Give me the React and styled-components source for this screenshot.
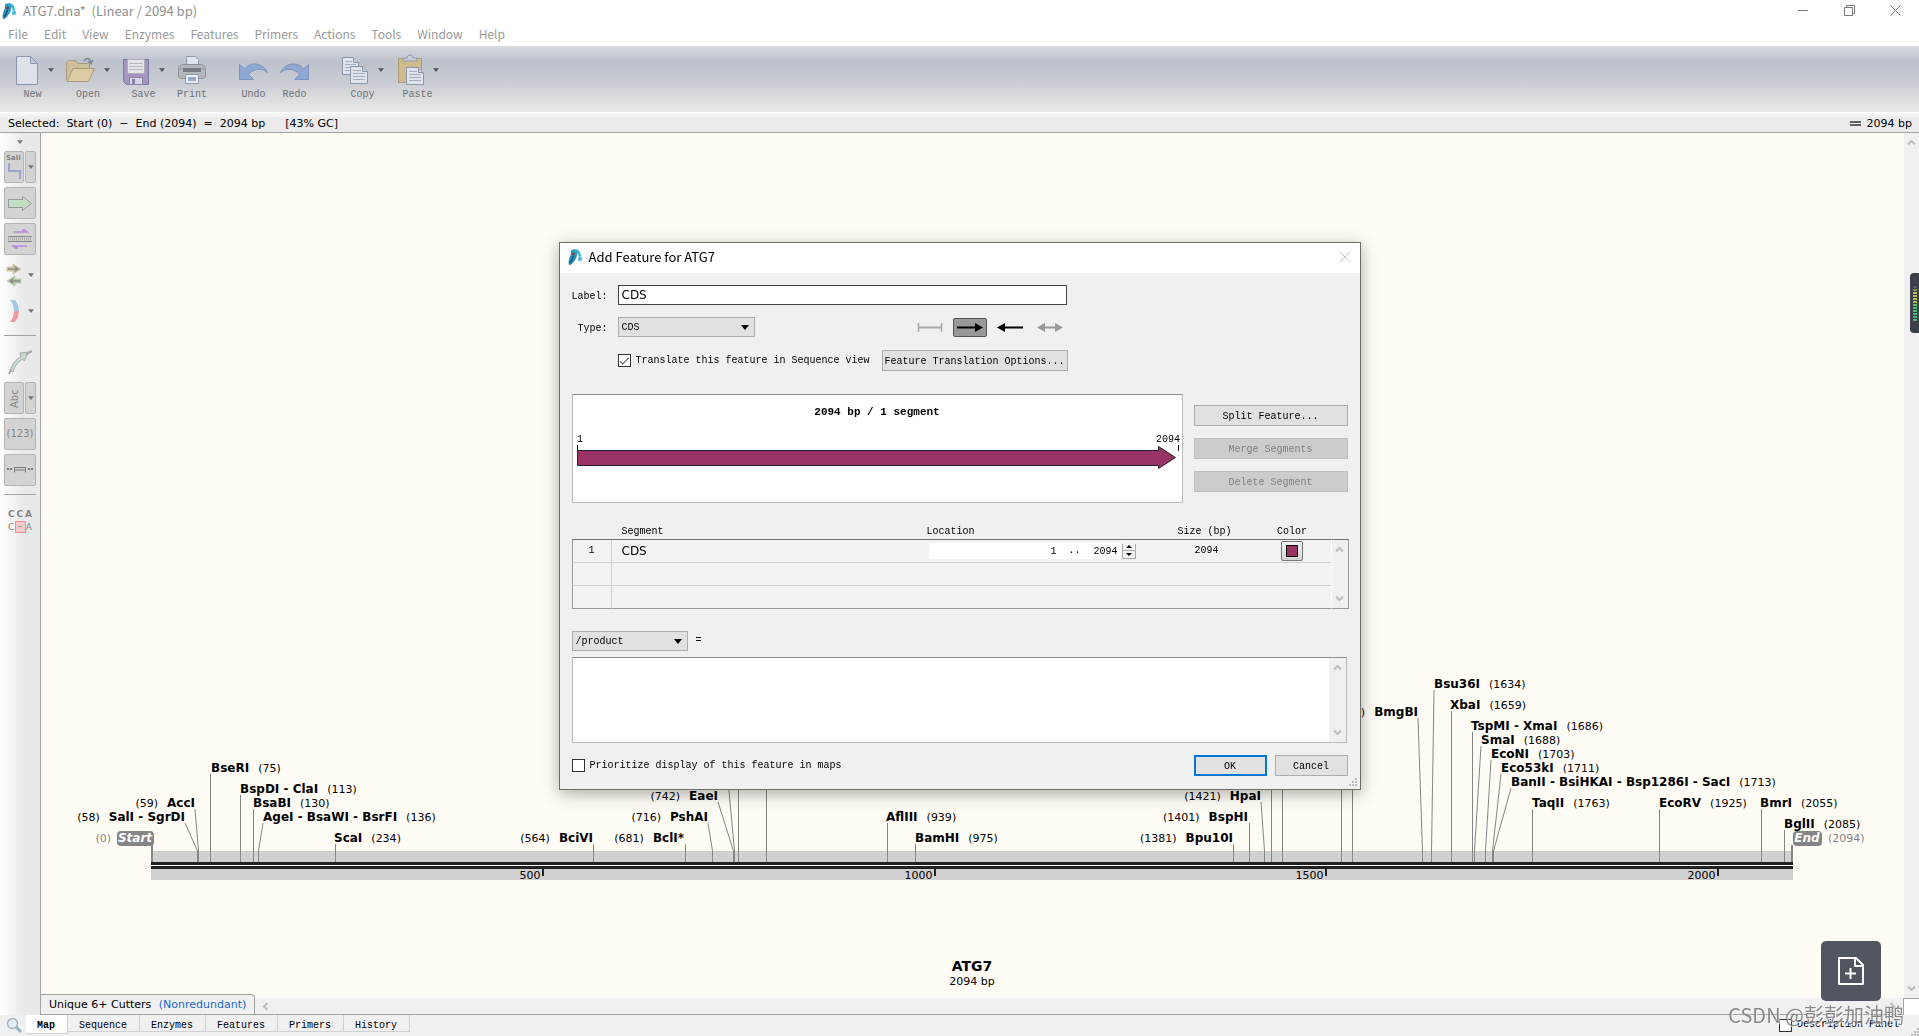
import React, { useState } from "react";
import styled, { createGlobalStyle, css } from "styled-components";

const ui = '"Noto Sans CJK SC", "Noto Sans", sans-serif';
const sans = '"DejaVu Sans", sans-serif';
const mono = '"Liberation Mono", monospace';

const GlobalStyle = createGlobalStyle`
  *, *::before, *::after { box-sizing: border-box; }
  body { margin: 0; background: #f0f0f0; color: #000; font: 11px ${sans}; overflow: hidden; }
  button, input, select, textarea { font: inherit; color: inherit; margin: 0; border-radius: 0; outline: none; }
  button { padding: 0; cursor: default; }
  svg { display: block; flex: none; }
`;

const Shell = styled.div`
  display: flex;
  flex-direction: column;
  height: 100vh;
  position: relative;
`;

/* ---------- title bar and menu ---------- */
const TitleBar = styled.header`
  display: flex;
  align-items: flex-start;
  gap: 6px;
  height: 24px;
  padding: 0 1px 0 2px;
  background: #fff;
  color: #8f8f8f;
  font: 13px/22px ${ui};
  & > svg { margin-top: 3px; }
`;
const TitleText = styled.h1`
  flex: 1;
  margin: 0;
  font: inherit;
  white-space: pre;
`;
const ControlSet = styled.div`
  display: flex;
`;
const WindowButton = styled.button`
  display: grid;
  place-items: center;
  width: 46px;
  height: 20px;
  border: 0;
  background: transparent;
  color: #777;
`;
const MenuBar = styled.nav`
  display: flex;
  gap: 16px;
  height: 22px;
  padding: 0 8px;
  background: #fff;
  font: 12px/20px ${ui};
`;
const MenuLink = styled.a`
  color: #999;
  text-decoration: none;
`;

/* ---------- toolbar ---------- */
const Toolbar = styled.div`
  display: flex;
  gap: 32px;
  height: 66px;
  padding: 8px 11px 0;
  background: linear-gradient(#d8dbe1 0, #bcc1cb 16px, #c9ccd3 36px, #e9e9e9 100%);
`;
const ToolGroup = styled.div`
  display: flex;
  gap: 12px;
`;
const ToolButton = styled.button`
  display: flex;
  flex-direction: column;
  align-items: center;
  gap: 3px;
  height: 50px;
  border: 0;
  background: transparent;
  color: #6f7278;
  font: 10px/12px ${mono};
`;
const ToolIcon = styled.span`
  display: flex;
  align-items: center;
  gap: 9px;
  height: 32px;
`;
const StatusBar = styled.div`
  display: flex;
  align-items: center;
  justify-content: space-between;
  height: 21px;
  padding: 2px 7px 0 8px;
  border-top: 1px solid #fff;
  border-bottom: 1px solid #a3a3a3;
  background: linear-gradient(#fafafa, #ebebeb 5px);
  font: 11px/18px ${sans};
  white-space: pre;
`;
const Selection = styled.div`
  display: flex;
  gap: 7px;
`;
const Gc = styled.span`
  padding-left: 13px;
`;
const Strands = styled.span`
  display: inline-flex;
  align-items: center;
  gap: 6px;
`;

/* ---------- workspace ---------- */
const Workspace = styled.div`
  display: flex;
  flex: 1;
  min-height: 0;
`;
const SideBar = styled.aside`
  display: flex;
  flex-direction: column;
  gap: 4px;
  width: 41px;
  padding: 4px 4px 0;
  border-right: 1px solid #a3a3a3;
  background: linear-gradient(90deg, #fff, #e9e9e9 60%);
  color: #999;
`;
const SideCaret = styled.button`
  display: grid;
  place-items: center;
  height: 10px;
  border: 0;
  background: transparent;
`;
const SideRow = styled.div`
  display: flex;
  gap: 1px;
  height: 32px;
`;
const SideButton = styled.button`
  display: grid;
  place-items: center;
  flex: ${(p) => (p.$narrow ? "0 0 11px" : "1")};
  border: 1px solid ${(p) => (p.$flat ? "transparent" : "#b4b4b4")};
  border-radius: 2px;
  background: ${(p) => (p.$flat ? "transparent" : "#d3d3d3")};
  color: #858585;
  font: 10px/12px ${sans};
`;
const SideRule = styled.hr`
  width: 100%;
  height: 11px;
  margin: 0;
  border: 0;
  background: linear-gradient(#a3a3a3, #a3a3a3) 0 4px / 100% 1px no-repeat;
`;
const Sequences = styled.div`
  padding: 3px 0 0 4px;
  color: #858585;
  font: 9px/12px ${sans};
`;
const Bases = styled.div`
  display: flex;
  justify-content: space-between;
  width: 24px;
  height: 13px;
  font-weight: ${(p) => (p.$bold ? "bold" : "normal")};
`;
const Gap = styled.span`
  width: 11px;
  height: 12px;
  border: 1px solid #ef8d8d;
  background: #f5cccc;
  line-height: 9px;
  text-align: center;
`;
const View = styled.main`
  display: flex;
  flex-direction: column;
  flex: 1;
  min-width: 0;
`;
const ViewBody = styled.div`
  display: flex;
  flex: 1;
  min-height: 0;
`;
const Canvas = styled.div`
  flex: 1;
  min-width: 0;
  background: #fffcf5;
`;
const MapSvg = styled.svg`
  width: 100%;
  height: 100%;
  font: 11px ${sans};
`;
const VScroll = styled.div`
  display: flex;
  flex-direction: column;
  justify-content: space-between;
  align-items: center;
  width: ${(p) => p.$w || 17}px;
  padding: 5px 0;
  background: #f0f0f0;
`;
const ViewFoot = styled.div`
  display: flex;
  align-items: center;
  justify-content: space-between;
  height: 17px;
  border-bottom: 1px solid #a3a3a3;
  background: #f0f0f0;
`;
const FootLeft = styled.div`
  display: flex;
  align-items: center;
  gap: 6px;
`;
const FootRight = styled(FootLeft)`
  height: 100%;
`;
const Corner = styled.span`
  width: 16px;
  height: 17px;
  border: 1px solid #a3a3a3;
  border-width: 1px 0 0 1px;
  background: #fff;
`;
const EnzymeTab = styled.button`
  height: 20px;
  margin-top: -4px;
  padding: 1px 8px 0;
  border: 1px solid #a3a3a3;
  border-width: 1px 1px 0 0;
  border-radius: 0 4px 0 0;
  background: #f0f0f0;
  color: #000;
  font: 11px/18px ${sans};
  white-space: pre;
`;
const Blue = styled.span`
  padding-left: 4px;
  color: #1668c8;
`;

/* ---------- bottom tabs ---------- */
const BottomBar = styled.footer`
  display: flex;
  align-items: flex-start;
  justify-content: space-between;
  height: 21px;
  background: #f0f0f0;
  font: 10px/12px ${mono};
`;
const Tabs = styled.div`
  display: flex;
  align-items: flex-start;
`;
const Magnifier = styled.button`
  width: 26px;
  padding: 2px 0 0 6px;
  border: 0;
  background: transparent;
`;
const Tab = styled.button`
  display: flex;
  height: ${(p) => (p.$on ? 19 : 17)}px;
  padding: 4px 12px 0 11px;
  border: 1px solid #d0d0d0;
  border-width: 0 1px 1px 0;
  background: ${(p) => (p.$on ? "#fff" : "#f0f0f0")};
  font-weight: ${(p) => (p.$on ? "bold" : "normal")};
  line-height: 13px;
`;
const CheckLabel = styled.label`
  display: inline-flex;
  align-items: center;
  gap: 5px;
  font: 10px/14px ${mono};
  white-space: pre;
`;
const Check = styled.input.attrs({ type: "checkbox" })`
  appearance: none;
  display: grid;
  place-items: center;
  width: 13px;
  height: 13px;
  border: 1px solid #333;
  background: #fff;
  &:checked::before {
    content: "";
    width: 9px;
    height: 4px;
    border: solid #444;
    border-width: 0 0 1px 1px;
    transform: translateY(-1px) rotate(-45deg);
  }
`;
const PanelToggle = styled.div`
  padding: 3px 20px 0 0;
`;

/* ---------- things floating over the window ---------- */
const NoteButton = styled.button`
  position: absolute;
  right: 38px;
  bottom: 35px;
  display: grid;
  place-items: center;
  width: 60px;
  height: 60px;
  border: 0;
  border-radius: 5px;
  background: #50555f;
`;
const EdgeMeter = styled.div`
  position: absolute;
  right: 0;
  top: 273px;
  display: flex;
  flex-direction: column;
  justify-content: center;
  align-items: center;
  gap: 1px;
  width: 9px;
  height: 60px;
  border-radius: 4px 0 0 4px;
  background: #3c404a;
`;
const MeterBar = styled.i`
  width: 4px;
  height: 2px;
  background: ${(p) => p.$c};
`;
const Watermark = styled.div`
  position: absolute;
  right: 15px;
  bottom: 7px;
  color: rgba(125, 125, 125, 0.9);
  font: 400 20px/28px "Noto Sans CJK SC", sans-serif;
  text-shadow: 1px 1px 0 rgba(255, 255, 255, 0.7);
  white-space: nowrap;
  pointer-events: none;
`;

/* ---------- dialog ---------- */
const Overlay = styled.div`
  position: fixed;
  inset: 0;
  display: flex;
  align-items: center;
  justify-content: center;
  padding-bottom: 4px;
`;
const Dialog = styled.section`
  width: 802px;
  border: 1px solid #6c6e6c;
  background: #f0f0f0;
  box-shadow: 0 4px 16px rgba(0, 0, 0, 0.32);
  font: 10px/12px ${mono};
`;
const DialogTitle = styled.div`
  display: flex;
  align-items: center;
  gap: 6px;
  height: 30px;
  padding: 0 9px 2px 8px;
  background: #fff;
`;
const DialogName = styled.h2`
  flex: 1;
  margin: 0;
  font: 13px/26px ${ui};
`;
const PlainButton = styled.button`
  border: 0;
  background: transparent;
`;
const DialogBody = styled.form`
  padding: 12px 11px 13px 12px;
`;
const FormGrid = styled.div`
  display: grid;
  grid-template-columns: 36px 450px;
  grid-template-rows: 20px 20px 23px;
  column-gap: 10px;
  row-gap: 12px;
  align-items: center;
`;
const FieldLabel = styled.label`
  padding-top: 3px;
  text-align: right;
`;
const TextField = styled.input`
  width: 449px;
  height: 20px;
  padding: 0 3px;
  border: 1px solid #444;
  background: #fff;
  font: 12px/18px ${sans};
`;
const Split = styled.div`
  display: flex;
  align-items: center;
  justify-content: space-between;
  grid-column: 2;
`;
const SelectBox = styled.span`
  position: relative;
  display: inline-block;
  width: ${(p) => p.$w}px;
  height: 20px;
  & > svg { position: absolute; right: 6px; top: 8px; pointer-events: none; }
`;
const Select = styled.select`
  appearance: none;
  width: 100%;
  height: 20px;
  padding: 2px 3px 0;
  border: 1px solid #adadad;
  background: #e1e1e1;
`;
const ArrowGroup = styled.div`
  display: flex;
  gap: 6px;
  padding-right: 1px;
`;
const ArrowButton = styled.button`
  display: grid;
  place-items: center;
  width: 34px;
  height: 19px;
  border: 1px solid ${(p) => (p.$on ? "#555" : "transparent")};
  border-radius: 2px;
  background: ${(p) => (p.$on ? "#999" : "transparent")};
`;
const PushButton = styled.button`
  width: ${(p) => p.$w}px;
  height: 21px;
  padding-top: 2px;
  border: 1px solid #adadad;
  background: #e1e1e1;
  white-space: pre;
  &:disabled { border-color: #bfbfbf; background: #ccc; color: #808080; }
  ${(p) => p.$primary && css`border: 2px solid #0078d7;`}
`;
const PreviewRow = styled.div`
  display: flex;
  justify-content: space-between;
  margin: 22px 0 23px;
`;
const Preview = styled.div`
  flex: 0 0 611px;
  height: 109px;
  border: 1px solid #bbb;
  border-top-color: #8c8c8c;
  background: #fff;
`;
const ButtonStack = styled.div`
  display: flex;
  flex-direction: column;
  gap: 12px;
  padding: 11px 1px 0 0;
`;
const TableWrap = styled.div`
  display: flex;
  align-items: flex-end;
`;
const Table = styled.table`
  flex: 1;
  table-layout: fixed;
  border-spacing: 0;
`;
const Th = styled.th`
  height: 14px;
  padding: ${(p) => p.$pad || "0 0 1px"};
  border-bottom: 1px solid #6f6f6f;
  font-weight: normal;
  line-height: 12px;
  text-align: ${(p) => p.$align || "left"};
`;
const Td = styled.td`
  height: 23px;
  padding: ${(p) => p.$pad || "0"};
  border-bottom: 1px solid ${(p) => (p.$last ? "#999" : "#d0d0d0")};
  background: #f2f2f2;
  text-align: ${(p) => p.$align || "left"};
  vertical-align: middle;
  font: ${(p) => (p.$sans ? `12px/14px ${sans}` : "inherit")};
  &:first-child { border-left: 1px solid #999; border-right: 1px solid #d0d0d0; }
`;
const TableScroll = styled(VScroll)`
  width: 18px;
  height: 70px;
  border: 1px solid #999;
  border-top-color: #6f6f6f;
  border-left-color: #fff;
`;
const Range = styled.div`
  display: flex;
  align-items: center;
  width: 192px;
  height: 16px;
  background: #fff;
`;
const RangeInput = styled.input`
  width: ${(p) => p.$w}px;
  height: 16px;
  padding: 1px 0 0;
  border: 0;
  background: transparent;
  text-align: right;
`;
const Dots = styled.span`
  width: 36px;
  padding-left: 12px;
`;
const RangeRow = styled.div`
  display: flex;
  align-items: center;
  gap: 1px;
`;
const Spinner = styled.div`
  display: flex;
  flex-direction: column;
  width: 14px;
  height: 15px;
  border: 1px solid #aaa;
  border-top: 0;
`;
const SpinButton = styled.button`
  display: grid;
  place-items: center;
  flex: 1;
  border: 0;
  background: #f2f2f2;
  & + & { border-top: 1px solid #aaa; }
`;
const ColorButton = styled.button`
  display: inline-grid;
  place-items: center;
  width: 22px;
  height: 20px;
  border: 1px solid #777;
  border-radius: 2px;
  background: linear-gradient(#f6f6f6, #d3d3d3);
  vertical-align: middle;
`;
const Swatch = styled.i`
  width: 12px;
  height: 12px;
  border: 1px solid #000;
  background: #993366;
`;
const QualifierRow = styled.div`
  display: flex;
  align-items: center;
  gap: 8px;
  margin: 22px 0 6px;
`;
const NoteBox = styled.div`
  display: flex;
  width: 775px;
  height: 86px;
  border: 1px solid #bbb;
  border-top-color: #8c8c8c;
  background: #fff;
`;
const NoteText = styled.textarea`
  flex: 1;
  border: 0;
  padding: 3px;
  background: transparent;
  resize: none;
`;
const Actions = styled.div`
  display: flex;
  align-items: center;
  justify-content: space-between;
  padding: 12px 1px 0 0;
`;
const ActionPair = styled.div`
  display: flex;
  gap: 8px;
`;
const Grip = styled.svg`
  position: absolute;
  right: ${(p) => p.$r}px;
  bottom: ${(p) => p.$b}px;
`;
const DialogFrame = styled.div`
  position: relative;
`;

/* ---------- small drawings ---------- */
const Caret = ({ size = 6, color = "#555" }) => (
  <svg width={size} height={size / 2 + 1} viewBox="0 0 8 5"><path d="M0 0h8L4 5z" fill={color} /></svg>
);
const Chevron = ({ dir }) => {
  const turn = { up: 0, right: 90, down: 180, left: 270 }[dir];
  return (
    <svg width="9" height="9" viewBox="0 0 9 9">
      <path d="M1 6.5 4.5 3 8 6.5" fill="none" stroke="#bdbdbd" strokeWidth="2" transform={`rotate(${turn} 4.5 4.5)`} />
    </svg>
  );
};
const Logo = () => (
  <svg width="15" height="16" viewBox="0 0 15 16">
    <path d="M3.500 1.500C6 0 9 .5 9 3.500c0 4-2.500 9-6 11.800L1 15.500C.8 12 1.500 9 3 6z" fill="#22a0c8" stroke="#14688c" strokeWidth=".6" />
    <path d="M7 1.200c3 0 4.500 3 5 6.500" fill="none" stroke="#2fb4dc" strokeWidth="2.400" />
    <circle cx="12" cy="10" r="2.300" fill="#58bfe0" />
    <path d="M2 14C3.500 12 5 9 5.500 7" fill="none" stroke="#0c4a6a" strokeWidth="1.300" />
    <circle cx="5.500" cy="5" r="1.400" fill="#8c3a42" />
  </svg>
);
const Sheet = ({ x = 0, y = 0, w = 17, h = 18 }) => (
  <g transform={`translate(${x} ${y})`}>
    <path d={`M.5.5h${w - 6}l5 5v${h - 6}h-${w - 1}z`} fill="#dfe4ec" stroke="#8b97ab" />
    <path d={`M${w - 5.5}.5v5h5`} fill="#c5cedb" stroke="#8b97ab" />
    {[4, 7, 10, 13].map((t) => <path key={t} d={`M3 ${t}.5h${t < 6 ? w - 10 : w - 6}`} stroke="#a5afbf" />)}
  </g>
);
const icons = {
  New: (
    <svg width="28" height="32" viewBox="0 0 28 32">
      <path d="M5.500 2.500h14l7 7v21h-21z" fill="#dde1e8" stroke="#8b97ab" />
      <path d="M19.500 2.500v7h7z" fill="#c2cbd8" stroke="#8b97ab" />
    </svg>
  ),
  Open: (
    <svg width="29" height="32" viewBox="0 0 29 32">
      <path d="M.5 26V8.500l2-2h7l2 3h12V14" fill="#cfc09d" stroke="#a89a7c" />
      <path d="m1 27.500 6-13h21.500l-6 13z" fill="#dccba3" stroke="#a89a7c" />
      <path d="M18 7c2-4 6-3 7 1m-3-1 3 2.500L27 6" fill="none" stroke="#7c8797" strokeWidth="1.500" />
    </svg>
  ),
  Save: (
    <svg width="28" height="32" viewBox="0 0 28 32">
      <path d="M1.500 5.500h25v25h-22l-3-3z" fill="#a295c2" stroke="#7f76a3" />
      <path d="M5.500 5.500h17v14h-17z" fill="#e2e4e8" stroke="#aab" />
      <path d="M7 9.500h14M7 12.500h14M7 15.500h14" stroke="#b4b9c2" />
      <path d="M7.500 23.500h13v7h-13z" fill="#d5d7df" stroke="#8d86a8" /><path d="M10 25h3v5h-3z" fill="#8a80ac" />
    </svg>
  ),
  Print: (
    <svg width="28" height="32" viewBox="0 0 28 32">
      <path d="M8.500 2.500h9l3 3v8h-12z" fill="#dfe4ec" stroke="#8b97ab" />
      <path d="M4 10.500h20l3.500 3v9l-3 2h-21l-3-2v-9z" fill="#b3b6bb" stroke="#8e9298" />
      <path d="M5 14h18v4H5z" fill="#787c83" /><path d="M2 15h2m20 0h2" stroke="#7faa88" strokeWidth="1.500" />
      <path d="M7.500 20.500h13v9h-13z" fill="#e8edf4" stroke="#8b97ab" />
      <path d="M10 23h8v4h-8z" fill="#8fb0d6" /><path d="M13 24h3v3h-3z" fill="#c79a9a" />
    </svg>
  ),
  Undo: (
    <svg width="29" height="32" viewBox="0 0 29 32">
      <path d="M.5 10.500v15h14l-5-5c5-6 13-7 19-2C24 9 12 7 5.500 15z" fill="#8fa8d4" stroke="#7e93bd" />
    </svg>
  ),
  Redo: (
    <svg width="29" height="32" viewBox="0 0 29 32">
      <path d="M28.500 10.500v15h-14l5-5c-5-6-13-7-19-2C5 9 17 7 23.500 15z" fill="#8fa8d4" stroke="#7e93bd" />
    </svg>
  ),
  Copy: (
    <svg width="28" height="32" viewBox="0 0 28 32"><Sheet x={1} y={3} /><Sheet x={9} y={12} w={18} /></svg>
  ),
  Paste: (
    <svg width="28" height="32" viewBox="0 0 28 32">
      <path d="M2.500 4.500h23v24h-23z" fill="#cfbb8e" stroke="#aa9a76" />
      <path d="M7 7V4h4c0-4 6-4 6 0h4v3z" fill="#c9ced8" stroke="#8b97ab" />
      <Sheet x={10} y={13} w={18} />
    </svg>
  ),
};
const Arrow = ({ left, right, bars, color = "#000" }) => (
  <svg width="26" height="11" viewBox="0 0 26 11">
    <path d={bars ? "M1 5.500h24" : `M${left ? 4 : 0} 5.500H${right ? 22 : 26}`} stroke={color} strokeWidth="2" />
    {bars && <path d="M1.500 1v9M24.500 1v9" stroke={color} strokeWidth="1.500" />}
    {right && <path d="M18 1v9l8-4.500z" fill={color} />}
    {left && <path d="M8 1v9L0 5.500z" fill={color} />}
  </svg>
);
const GripDots = (p) => (
  <Grip width="8" height="8" viewBox="0 0 8 8" {...p}>
    <path d="M6 0h2v2H6zM3 3h2v2H3zM6 3h2v2H6zM0 6h2v2H0zM3 6h2v2H3zM6 6h2v2H6z" fill="#bbb" />
  </Grip>
);

/* ---------- restriction map ---------- */
const AXIS = 152;
const LENGTH = 2094;
const at = (bp) => Math.floor(AXIS + (bp * 1640) / LENGTH) + 0.5;
const sites = [
  { n: "BseRI", bp: 75, x: 211, y: 768 },
  { n: "BspDI - ClaI", bp: 113, x: 240, y: 789 },
  { n: "BsaBI", bp: 130, x: 253, y: 803 },
  { n: "AgeI - BsaWI - BsrFI", bp: 136, x: 263, y: 817 },
  { n: "ScaI", bp: 234, x: 334, y: 838 },
  { n: "AccI", bp: 59, x: 195, y: 803, end: true },
  { n: "SalI - SgrDI", bp: 58, x: 185, y: 817, end: true },
  { n: "BciVI", bp: 564, x: 593, y: 838, end: true },
  { n: "BclI*", bp: 681, x: 684, y: 838, end: true },
  { n: "PshAI", bp: 716, x: 708, y: 817, end: true },
  { n: "EaeI", bp: 742, x: 718, y: 796, end: true },
  { n: "AflIII", bp: 939, x: 886, y: 817 },
  { n: "BamHI", bp: 975, x: 915, y: 838 },
  { n: "Bpu10I", bp: 1381, x: 1233, y: 838, end: true },
  { n: "BspHI", bp: 1401, x: 1248, y: 817, end: true },
  { n: "HpaI", bp: 1421, x: 1261, y: 796, end: true },
  { n: "BmgBI", bp: 1622, x: 1418, y: 712, end: true },
  { n: "Bsu36I", bp: 1634, x: 1434, y: 684 },
  { n: "XbaI", bp: 1659, x: 1450, y: 705 },
  { n: "TspMI - XmaI", bp: 1686, x: 1471, y: 726 },
  { n: "SmaI", bp: 1688, x: 1481, y: 740 },
  { n: "EcoNI", bp: 1703, x: 1491, y: 754 },
  { n: "Eco53kI", bp: 1711, x: 1501, y: 768 },
  { n: "BanII - BsiHKAI - Bsp1286I - SacI", bp: 1713, x: 1511, y: 782 },
  { n: "TaqII", bp: 1763, x: 1532, y: 803 },
  { n: "EcoRV", bp: 1925, x: 1659, y: 803 },
  { n: "BmrI", bp: 2055, x: 1760, y: 803 },
  { n: "BglII", bp: 2085, x: 1784, y: 824 },
];
const tallSites = [
  { bp: 744, x: 728 }, { bp: 749 }, { bp: 785 }, { bp: 1429 }, { bp: 1444 }, { bp: 1519 }, { bp: 1533 },
];
const Name = ({ children, dx }) => <tspan fontWeight="bold" fontSize="12" dx={dx}>{children}</tspan>;

const Site = ({ n, bp, x, y, end }) => {
  const base = at(bp);
  const top = Math.abs(base - x) < 2 ? base : x;
  return (
    <g>
      <path d={`M${top} ${y + 6}L${base} 851V862`} stroke="#858585" fill="none" />
      {end ? (
        <text x={x} y={y + 4} textAnchor="end">({bp})<Name dx="9">{n}</Name></text>
      ) : (
        <text x={x} y={y + 4}><Name>{n}</Name><tspan dx="9">({bp})</tspan></text>
      )}
    </g>
  );
};

const SequenceMap = () => (
  <MapSvg viewBox="41 133 1863 865" role="img" aria-label="ATG7 restriction map">
    <rect x="151" y="851" width="1642" height="29" fill="#d0d0d0" />
    {tallSites.map((s) => (
      <path key={s.bp} d={`M${s.x || at(s.bp)} 780L${at(s.bp)} 851V862`} stroke="#858585" fill="none" />
    ))}
    {sites.map((s) => <Site key={s.n} {...s} />)}
    <path d="M152 845v17M1792 845v17" stroke="#858585" strokeWidth="2" fill="none" />
    <rect x="151" y="862" width="1642" height="7" fill="#f4f4f4" />
    <path d="M151 863.500h1642M151 867.500h1642" stroke="#222" strokeWidth="3" />
    {[500, 1000, 1500, 2000].map((bp) => (
      <g key={bp}>
        <path d={`M${at(bp) - 0.5} 869v7`} stroke="#222" strokeWidth="2" />
        <text x={at(bp) - 3} y="879" textAnchor="end">{bp}</text>
      </g>
    ))}
    <g fill="#858585">
      <text x="111" y="842" textAnchor="end">(0)</text>
      <rect x="117" y="831" width="37" height="15" rx="4" />
      <rect x="1793" y="831" width="29" height="15" rx="4" />
      <text x="1828" y="842">(2094)</text>
    </g>
    <g fill="#fff" fontWeight="bold" fontStyle="italic" fontSize="12" textAnchor="middle">
      <text x="135" y="842">Start</text>
      <text x="1807" y="842">End</text>
    </g>
    <text x="972" y="971" textAnchor="middle" fontSize="14" fontWeight="bold">ATG7</text>
    <text x="972" y="985" textAnchor="middle">2094 bp</text>
  </MapSvg>
);

/* ---------- side bar ---------- */
const Side = () => (
  <SideBar>
    <SideCaret aria-label="More"><Caret size={6} color="#777" /></SideCaret>
    <SideRow>
      <SideButton aria-label="Show enzymes">
        <svg width="18" height="28" viewBox="0 0 18 28">
          <text x="1" y="7" fontSize="7" fontWeight="bold" fill="#858585" fontFamily="DejaVu Sans">SalI</text>
          <path d="M4 10v8h11v8" fill="none" stroke="#97a8d0" strokeWidth="2" />
        </svg>
      </SideButton>
      <SideButton $narrow aria-label="Enzyme options"><Caret color="#777" /></SideButton>
    </SideRow>
    <SideRow>
      <SideButton aria-label="Show features">
        <svg width="24" height="15" viewBox="0 0 24 15"><path d="M.5 3.500h14v-3l9 7-9 7v-3H.5z" fill="#c3dfc3" stroke="#999" /></svg>
      </SideButton>
    </SideRow>
    <SideRow>
      <SideButton aria-label="Show primers">
        <svg width="24" height="20" viewBox="0 0 24 20">
          <path d="M5 3h14l-4-3v3M19 17H5l4 3v-3" fill="#b88fdd" stroke="#b88fdd" strokeWidth="1.500" />
          <path d="M0 7.500h24M0 12.500h24" stroke="#888" /><path d="M0 10h24" stroke="#aaa" strokeWidth="3" strokeDasharray="1 1" />
        </svg>
      </SideButton>
    </SideRow>
    <SideRow>
      <SideButton $flat aria-label="Show ORFs">
        <svg width="16" height="24" viewBox="0 0 16 24">
          <path d="M1 4h6V1l8 5-8 5V8H1z" fill="#dcc9a8" stroke="#c8b48c" strokeWidth=".7" /><path d="M2 6h9M8.500 3.500 12 6 8.500 8.500" fill="none" stroke="#888" strokeWidth="1.300" />
          <path d="M15 16H9v-3l-8 5 8 5v-3h6z" fill="#bcd6b0" stroke="#a5c196" strokeWidth=".7" /><path d="M14 18H5M7.500 15.500 4 18l3.500 2.500" fill="none" stroke="#888" strokeWidth="1.300" />
        </svg>
      </SideButton>
      <SideButton $flat $narrow aria-label="ORF options"><Caret color="#777" /></SideButton>
    </SideRow>
    <SideRow>
      <SideButton $flat aria-label="Show translations">
        <svg width="16" height="24" viewBox="0 0 16 24">
          <path d="M4 1h5q4 5 4 11H8Q8 6 4 1z" fill="#9fcbe8" /><path d="M4 23h5q4-5 4-11H8q0 6-4 11z" fill="#ec9c9c" />
        </svg>
      </SideButton>
      <SideButton $flat $narrow aria-label="Translation options"><Caret color="#777" /></SideButton>
    </SideRow>
    <SideRule />
    <SideRow>
      <SideButton $flat aria-label="Draw feature">
        <svg width="26" height="26" viewBox="0 0 26 26">
          <path d="M3 22C5 15 9 10 14 8l-1-4 9-1-5 9-1-2C12 12 8 16 6 23z" fill="#c3dcc8" stroke="#aaa" />
          <path d="m2 25 2-5M19 5l6-3" stroke="#aaa" strokeWidth="2" />
        </svg>
      </SideButton>
    </SideRow>
    <SideRow>
      <SideButton aria-label="Label names">
        <svg width="14" height="24" viewBox="0 0 14 24">
          <text transform="translate(11 22) rotate(-90)" fontSize="10" fill="#858585" fontFamily="DejaVu Sans">Abc</text>
        </svg>
      </SideButton>
      <SideButton $narrow aria-label="Label options"><Caret color="#777" /></SideButton>
    </SideRow>
    <SideRow><SideButton>(123)</SideButton></SideRow>
    <SideRow>
      <SideButton aria-label="Show ends">
        <svg width="26" height="8" viewBox="0 0 26 8">
          <path d="M0 3h2M3 3h2M21 3h2M24 3h2" stroke="#777" strokeWidth="2" />
          <path d="M7.500 6.500v-5h11v5M7.500 4h11" fill="none" stroke="#777" />
        </svg>
      </SideButton>
    </SideRow>
    <SideRule />
    <Sequences>
      <Bases $bold><span>C</span><span>C</span><span>A</span></Bases>
      <Bases><span>C</span><Gap>–</Gap><span>A</span></Bases>
    </Sequences>
  </SideBar>
);

/* ---------- dialog ---------- */
const FeatureDialog = () => {
  const [dir, setDir] = useState(1);
  const dirs = [
    { l: "No direction", a: <Arrow bars color="#aaa" /> },
    { l: "Forward", a: <Arrow right /> },
    { l: "Reverse", a: <Arrow left /> },
    { l: "Both directions", a: <Arrow left right color="#999" /> },
  ];
  return (
    <Dialog role="dialog" aria-labelledby="dialog-name">
      <DialogFrame>
        <DialogTitle>
          <Logo />
          <DialogName id="dialog-name">Add Feature for ATG7</DialogName>
          <PlainButton aria-label="Close">
            <svg width="12" height="12" viewBox="0 0 12 12"><path d="m1 1 10 10M11 1 1 11" stroke="#c4c4c4" /></svg>
          </PlainButton>
        </DialogTitle>
        <DialogBody onSubmit={(e) => e.preventDefault()}>
          <FormGrid>
            <FieldLabel htmlFor="label">Label:</FieldLabel>
            <TextField id="label" defaultValue="CDS" />
            <FieldLabel htmlFor="type">Type:</FieldLabel>
            <Split>
              <SelectBox $w={137}>
                <Select id="type"><option>CDS</option><option>gene</option></Select>
                <Caret size={8} color="#000" />
              </SelectBox>
              <ArrowGroup>
                {dirs.map((d, i) => (
                  <ArrowButton key={d.l} type="button" aria-label={d.l} $on={dir === i} onClick={() => setDir(i)}>{d.a}</ArrowButton>
                ))}
              </ArrowGroup>
            </Split>
            <Split>
              <CheckLabel><Check defaultChecked />Translate this feature in Sequence view</CheckLabel>
              <PushButton type="button" $w={186}>Feature Translation Options...</PushButton>
            </Split>
          </FormGrid>
          <PreviewRow>
            <Preview>
              <svg width="609" height="107" viewBox="0 0 609 107" fontFamily="Liberation Mono, monospace" fontSize="10">
                <text x="304" y="20" textAnchor="middle" fontWeight="bold" fontSize="11">2094 bp / 1 segment</text>
                <text x="4" y="47">1</text>
                <text x="607" y="47" textAnchor="end">2094</text>
                <path d="M4.500 50v6M605.500 50v6" stroke="#000" />
                <path d="M4.500 55.500h581v-4l17 11-17 11v-3h-581z" fill="#993366" stroke="#222" />
              </svg>
            </Preview>
            <ButtonStack>
              <PushButton type="button" $w={154}>Split Feature...</PushButton>
              <PushButton type="button" $w={154} disabled>Merge Segments</PushButton>
              <PushButton type="button" $w={154} disabled>Delete Segment</PushButton>
            </ButtonStack>
          </PreviewRow>
          <TableWrap>
            <Table>
              <colgroup>
                <col width="40" /><col /><col width="213" /><col width="130" /><col width="61" />
              </colgroup>
              <thead>
                <tr>
                  <Th aria-label="Number" />
                  <Th $pad="0 0 1px 10px">Segment</Th>
                  <Th>Location</Th>
                  <Th $align="center">Size (bp)</Th>
                  <Th $align="center" $pad="0 16px 1px 0">Color</Th>
                </tr>
              </thead>
              <tbody>
                <tr>
                  <Td $align="center">1</Td>
                  <Td $sans $pad="0 0 0 10px">CDS</Td>
                  <Td $pad="0 0 0 2px">
                    <RangeRow>
                      <Range>
                        <RangeInput $w={128} defaultValue="1" aria-label="Segment start" />
                        <Dots>..</Dots>
                        <RangeInput $w={25} defaultValue="2094" aria-label="Segment end" />
                      </Range>
                      <Spinner>
                        <SpinButton type="button" aria-label="Increase">
                          <svg width="6" height="3" viewBox="0 0 6 3"><path d="M0 3h6L3 0z" /></svg>
                        </SpinButton>
                        <SpinButton type="button" aria-label="Decrease">
                          <svg width="6" height="3" viewBox="0 0 6 3"><path d="M0 0h6L3 3z" /></svg>
                        </SpinButton>
                      </Spinner>
                    </RangeRow>
                  </Td>
                  <Td $align="center" $pad="0 0 0 4px">2094</Td>
                  <Td $align="center" $pad="0 16px 0 0">
                    <ColorButton type="button" aria-label="Segment color"><Swatch /></ColorButton>
                  </Td>
                </tr>
                <tr><Td /><Td /><Td /><Td /><Td /></tr>
                <tr><Td $last /><Td $last /><Td $last /><Td $last /><Td $last /></tr>
              </tbody>
            </Table>
            <TableScroll><Chevron dir="up" /><Chevron dir="down" /></TableScroll>
          </TableWrap>
          <QualifierRow>
            <SelectBox $w={116}>
              <Select aria-label="Qualifier"><option>/product</option><option>/note</option></Select>
              <Caret size={8} color="#000" />
            </SelectBox>
            <span>=</span>
          </QualifierRow>
          <NoteBox>
            <NoteText aria-label="Qualifier value" />
            <VScroll><Chevron dir="up" /><Chevron dir="down" /></VScroll>
          </NoteBox>
          <Actions>
            <CheckLabel><Check />Prioritize display of this feature in maps</CheckLabel>
            <ActionPair>
              <PushButton type="submit" $w={73} $primary>OK</PushButton>
              <PushButton type="button" $w={73}>Cancel</PushButton>
            </ActionPair>
          </Actions>
        </DialogBody>
        <GripDots $r={3} $b={3} />
      </DialogFrame>
    </Dialog>
  );
};

const WindowControls = () => (
  <ControlSet>
    <WindowButton aria-label="Minimize">
      <svg width="11" height="11" viewBox="0 0 11 11"><path d="M0 5.500h10" stroke="currentColor" /></svg>
    </WindowButton>
    <WindowButton aria-label="Restore">
      <svg width="11" height="11" viewBox="0 0 11 11"><path d="M.5 2.500h8v8h-8zM2.500 2V.5h8v8H9" fill="none" stroke="currentColor" /></svg>
    </WindowButton>
    <WindowButton aria-label="Close">
      <svg width="11" height="11" viewBox="0 0 11 11"><path d="m.5.5 10 10M10.500.5l-10 10" stroke="currentColor" /></svg>
    </WindowButton>
  </ControlSet>
);

const menus = ["File", "Edit", "View", "Enzymes", "Features", "Primers", "Actions", "Tools", "Window", "Help"];
const tools = [
  [["New", true], ["Open", true], ["Save", true], ["Print"]],
  [["Undo"], ["Redo"]],
  [["Copy", true], ["Paste", true]],
];
const tabs = ["Map", "Sequence", "Enzymes", "Features", "Primers", "History"];
const meter = ["#555a5c", "#7d8a55", "#c9b84a", "#c9b84a", "#b5bd4e", "#9cc25a", "#6dbb6a", "#4cb97a", "#4cb97a", "#4cb97a", "#4cb97a", "#4cb97a"];

export default function App() {
  const [tab, setTab] = useState("Map");
  return (
    <Shell>
      <GlobalStyle />
      <TitleBar>
        <Logo />
        <TitleText>{"ATG7.dna*  (Linear / 2094 bp)"}</TitleText>
        <WindowControls />
      </TitleBar>
      <MenuBar>{menus.map((m) => <MenuLink key={m} href="#">{m}</MenuLink>)}</MenuBar>
      <Toolbar>
        {tools.map((group, i) => (
          <ToolGroup key={i}>
            {group.map(([name, more]) => (
              <ToolButton key={name}>
                <ToolIcon>{icons[name]}{more && <Caret />}</ToolIcon>
                {name}
              </ToolButton>
            ))}
          </ToolGroup>
        ))}
      </Toolbar>
      <StatusBar>
        <Selection>
          <span>Selected:</span>
          <span>Start (0)</span>
          <span>−</span>
          <span>End (2094)</span>
          <span>=</span>
          <span>2094 bp</span>
          <Gc>[43% GC]</Gc>
        </Selection>
        <Strands>
          <svg width="11" height="5" viewBox="0 0 11 5"><path d="M0 1h11M0 4h11" stroke="#333" strokeWidth="1.500" /></svg>
          2094 bp
        </Strands>
      </StatusBar>
      <Workspace>
        <Side />
        <View>
          <ViewBody>
            <Canvas><SequenceMap /></Canvas>
            <VScroll $w={15}><Chevron dir="up" /><Chevron dir="down" /></VScroll>
          </ViewBody>
          <ViewFoot>
            <FootLeft>
              <EnzymeTab>Unique 6+ Cutters <Blue>(Nonredundant)</Blue></EnzymeTab>
              <Chevron dir="left" />
            </FootLeft>
            <FootRight><Chevron dir="right" /><Corner /></FootRight>
          </ViewFoot>
        </View>
      </Workspace>
      <BottomBar>
        <Tabs>
          <Magnifier aria-label="Find">
            <svg width="16" height="16" viewBox="0 0 16 16">
              <path d="m10 10 5 5" stroke="#8cb4cf" strokeWidth="3" />
              <circle cx="6.500" cy="6.500" r="5" fill="#e3f0f8" stroke="#a3b4c0" strokeWidth="1.500" />
            </svg>
          </Magnifier>
          {tabs.map((t) => <Tab key={t} $on={t === tab} onClick={() => setTab(t)}>{t}</Tab>)}
        </Tabs>
        <PanelToggle><CheckLabel><Check />Description Panel</CheckLabel></PanelToggle>
      </BottomBar>
      <GripDots $r={0} $b={0} />
      <Overlay><FeatureDialog /></Overlay>
      <EdgeMeter>{meter.map((c, i) => <MeterBar key={i} $c={c} />)}</EdgeMeter>
      <NoteButton aria-label="New note">
        <svg width="26" height="28" viewBox="0 0 26 28" fill="none" stroke="#fff" strokeWidth="2" strokeLinejoin="round">
          <path d="M1 1h17l7 7v19H1zM17 1v8h8M12.500 11v11M7 16.500h11" />
        </svg>
      </NoteButton>
      <Watermark>CSDN @彭彭加油鸭</Watermark>
    </Shell>
  );
}
